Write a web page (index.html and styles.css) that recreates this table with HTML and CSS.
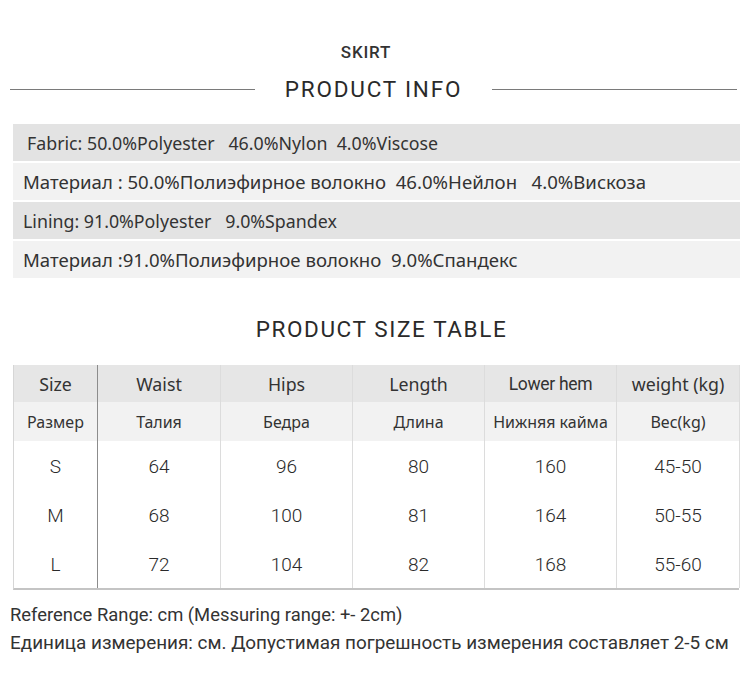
FILE: index.html
```html
<!DOCTYPE html>
<html lang="en">
<head>
<meta charset="utf-8">
<link rel="stylesheet" href="styles.css">
</head>
<body>
<div class="page">
  <div class="kicker">SKIRT</div>
  <div class="title-row">
    <span class="rule"></span>
    <h1 class="title">PRODUCT INFO</h1>
    <span class="rule"></span>
  </div>
  <div class="materials">
    <div class="mat dark en first">Fabric: 50.0%Polyester&nbsp;&nbsp; 46.0%Nylon&nbsp; 4.0%Viscose</div>
    <div class="mat light ru">Материал : 50.0%Полиэфирное волокно&nbsp;&nbsp;46.0%Нейлон&nbsp;&nbsp; 4.0%Вискоза</div>
    <div class="mat dark en">Lining: 91.0%Polyester&nbsp;&nbsp; 9.0%Spandex</div>
    <div class="mat light ru">Материал :91.0%Полиэфирное волокно&nbsp;&nbsp;9.0%Спандекс</div>
  </div>
  <h2 class="title2">PRODUCT SIZE TABLE</h2>
  <div class="table">
    <div class="row head1">
      <div class="c c1">Size</div><div class="c c2">Waist</div><div class="c c3">Hips</div><div class="c c4">Length</div><div class="c c5 narrow">Lower hem</div><div class="c c6">weight (kg)</div>
    </div>
    <div class="row head2">
      <div class="c c1">Размер</div><div class="c c2">Талия</div><div class="c c3">Бедра</div><div class="c c4">Длина</div><div class="c c5">Нижняя кайма</div><div class="c c6">Вес(kg)</div>
    </div>
    <div class="row data">
      <div class="c c1">S</div><div class="c c2">64</div><div class="c c3">96</div><div class="c c4">80</div><div class="c c5">160</div><div class="c c6">45-50</div>
    </div>
    <div class="row data">
      <div class="c c1">M</div><div class="c c2">68</div><div class="c c3">100</div><div class="c c4">81</div><div class="c c5">164</div><div class="c c6">50-55</div>
    </div>
    <div class="row data last">
      <div class="c c1">L</div><div class="c c2">72</div><div class="c c3">104</div><div class="c c4">82</div><div class="c c5">168</div><div class="c c6">55-60</div>
    </div>
  </div>
  <div class="notes">
    <p class="note1">Reference Range: cm (Messuring range: +- 2cm)</p>
    <p class="note2">Единица измерения: см. Допустимая погрешность измерения составляет 2-5 см</p>
  </div>
</div>
</body>
</html>
```
FILE: styles.css
```css
* { box-sizing: border-box; }
html, body { margin: 0; padding: 0; background: #fff; }
body { width: 750px; height: 680px; overflow: hidden; color: #333; font-family: "Noto Sans", "Open Sans", sans-serif; }
.page { display: flex; flex-direction: column; padding-top: 40px; }

.kicker {
  text-align: center; font-family: Roboto, sans-serif; font-weight: 500; font-size: 17px; line-height: 24px;
  color: #333; letter-spacing: 0.8px; padding-right: 18px;
}
.title-row { display: flex; align-items: center; height: 28px; margin-top: 11px; padding: 0 13px 0 10px; }
.rule { flex: 1; height: 1px; background: #7a7a7a; }
.title {
  margin: 0 30px; font-family: Roboto, sans-serif; font-weight: 400; font-size: 22.5px; line-height: 28px;
  color: #2a2a2a; letter-spacing: 1.8px;
}

.materials { display: flex; flex-direction: column; gap: 2px; margin: 21px 10px 0 13px; }
.mat { height: 37px; display: flex; align-items: center; padding-left: 10px; color: #333; }
.mat.en { font-size: 17.8px; }
.mat.ru { font-size: 18.6px; }
.mat.first { padding-left: 14px; }
.mat.dark { background: #e3e3e3; }
.mat.light { background: #f2f2f2; }

.title2 {
  margin: 37px 0 0; padding-left: 13px; text-align: center; font-family: Roboto, sans-serif; font-weight: 400; font-size: 22.5px;
  line-height: 28px; color: #2a2a2a; letter-spacing: 1.6px;
}

.table { margin: 22px 11px 0 13px; border-left: 1px solid #d6d6d6; border-bottom: 2px solid #c4c4c4; }
.row { display: grid; grid-template-columns: 84px 123px 132px 132px 132px 123px; }
.c { display: flex; align-items: center; justify-content: center; border-right: 1px solid #dcdcdc; }
.c1 { border-right-color: #8c8c8c; }
.head1 { height: 37px; background: #e6e6e6; font-size: 17.8px; }
.head2 { height: 39px; background: #f2f2f2; font-size: 16px; }
.head1 .c { padding-top: 1px; }
.head1 .narrow { font-family: Roboto, sans-serif; font-size: 17.5px; letter-spacing: -0.3px; }
.data { height: 49px; font-family: Roboto, sans-serif; font-weight: 300; font-size: 19px; color: #2a2a2a; }
.data .c { padding-top: 2px; }
.data.last { height: 49px; }

.notes { margin: 13px 0 0 10px; font-family: Roboto, sans-serif; color: #333; }
.notes p { margin: 0; }
.note1 { font-size: 18.4px; line-height: 24px; }
.note2 { font-size: 18.9px; line-height: 24px; margin-top: 4px !important; }
```
